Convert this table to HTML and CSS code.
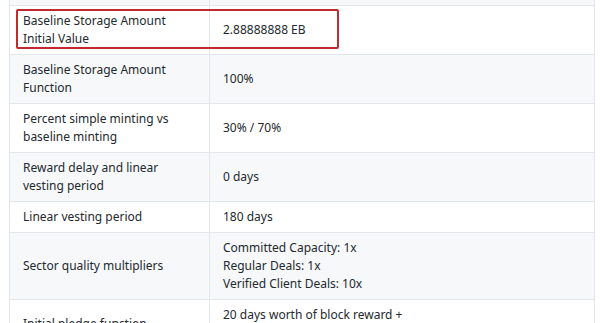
FILE: index.html
```html
<!DOCTYPE html>
<html>
  <head>
    <meta http-equiv="Content-Type" content="text/html;charset=utf-8" />
    <title>Network Parameters</title>
    <link rel="stylesheet" href="styles.css">
  </head>

  <body>
    <div class="sheet">
      <div class="mark"></div>
      <table class="params">
        <tr>
          <td>&nbsp;</td>
          <td>&nbsp;</td>
        </tr>
        <tr>
          <td>Baseline Storage Amount<br />Initial Value</td>
          <td>2.88888888 EB</td>
        </tr>
        <tr>
          <td>Baseline Storage Amount<br />Function</td>
          <td>100%</td>
        </tr>
        <tr>
          <td>Percent simple minting vs<br />baseline minting</td>
          <td>30% / 70%</td>
        </tr>
        <tr>
          <td>Reward delay and linear<br />vesting period</td>
          <td>0 days</td>
        </tr>
        <tr>
          <td>Linear vesting period</td>
          <td>180 days</td>
        </tr>
        <tr>
          <td>Sector quality multipliers</td>
          <td>
            Committed Capacity: 1x<br />
            Regular Deals: 1x<br />
            Verified Client Deals: 10x
          </td>
        </tr>
        <tr>
          <td>Initial pledge function</td>
          <td>
            20 days worth of block reward +<br />
            share of network circulating supply
          </td>
        </tr>
      </table>
    </div>
  </body>
</html>
```

FILE: styles.css
```css
body {
  margin: 0;
  background-color: #fff;
  font-family: "Noto Sans", "Open Sans", sans-serif;
  color: #24292e;
  overflow: hidden;
}

.sheet {
  display: flow-root;
  position: relative;
  padding-left: 9px;
}

.params {
  border-collapse: collapse;
  width: 586px;
  margin-top: -26px;
  font-size: 12px;
  line-height: 18px;
}

.params td {
  border: 1px solid #e3e6ea;
  padding: 6px 13px;
  vertical-align: middle;
}

.params td:first-child {
  width: 173px;
}

.params tr:nth-child(2n + 1) {
  background-color: #f6f8fa;
}

/* highlight box drawn over the first value row */
.mark {
  position: absolute;
  z-index: 1;
  left: 16px;
  top: 9px;
  width: 319px;
  height: 36px;
  border: 2px solid #c22a2f;
  border-radius: 2px;
}
```
